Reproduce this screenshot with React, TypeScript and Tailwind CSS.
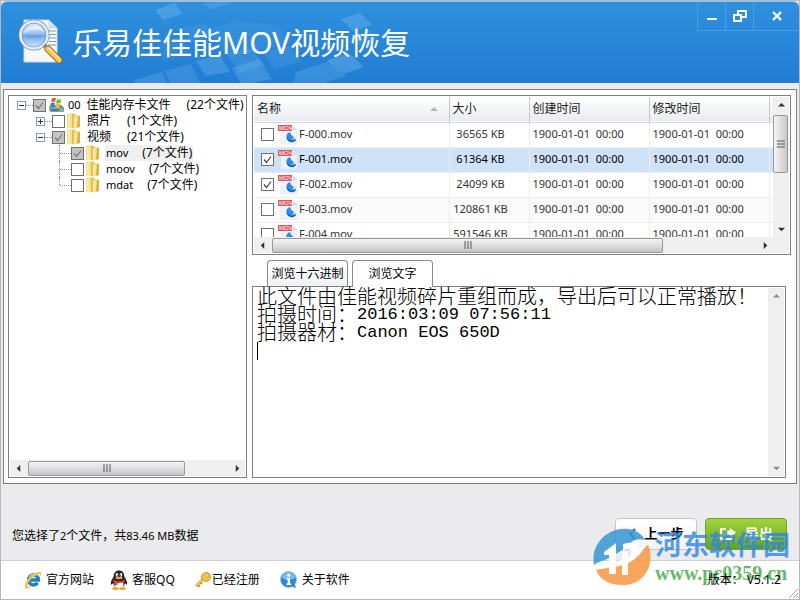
import * as React from "react";
import { useState } from "react";
import clsx from "clsx";

interface TreeNode {
  id: string;
  depth: number;
  prefix?: string;
  name: string;
  count: string;
  checked: boolean;
  expander?: "plus" | "minus";
  last?: boolean;
  active?: boolean;
}

interface FileRow {
  name: string;
  size: string;
  created: string;
  modified: string;
  checked: boolean;
}

const TREE: TreeNode[] = [
  { id: "root", depth: 0, prefix: "00", name: "佳能内存卡文件", count: "(22个文件)", checked: true, expander: "minus" },
  { id: "photo", depth: 1, name: "照片", count: "(1个文件)", checked: false, expander: "plus" },
  { id: "video", depth: 1, name: "视频", count: "(21个文件)", checked: true, expander: "minus", last: true },
  { id: "mov", depth: 2, name: "mov", count: "(7个文件)", checked: true, active: true },
  { id: "moov", depth: 2, name: "moov", count: "(7个文件)", checked: false },
  { id: "mdat", depth: 2, name: "mdat", count: "(7个文件)", checked: false, last: true },
];

const EMPTY_DATE = "1900-01-01\u00a0 00:00";

const FILES: FileRow[] = [
  { name: "F-000.mov", size: "36565 KB", created: EMPTY_DATE, modified: EMPTY_DATE, checked: false },
  { name: "F-001.mov", size: "61364 KB", created: EMPTY_DATE, modified: EMPTY_DATE, checked: true },
  { name: "F-002.mov", size: "24099 KB", created: EMPTY_DATE, modified: EMPTY_DATE, checked: true },
  { name: "F-003.mov", size: "120861 KB", created: EMPTY_DATE, modified: EMPTY_DATE, checked: false },
  { name: "F-004.mov", size: "591546 KB", created: EMPTY_DATE, modified: EMPTY_DATE, checked: false },
];

/* ---------- icons ---------- */

const AppLogo = () => (
  <svg viewBox="0 0 48 48" className="size-12 shrink-0" aria-hidden="true">
    <defs>
      <linearGradient id="lens" x1="0" y1="0" x2="0" y2="1">
        <stop offset="0" stopColor="#e4eefc" />
        <stop offset="0.45" stopColor="#9fc4f4" />
        <stop offset="0.5" stopColor="#6ea5ea" />
        <stop offset="1" stopColor="#d3f0ff" />
      </linearGradient>
      <linearGradient id="handle" x1="0" y1="1" x2="1" y2="0">
        <stop offset="0" stopColor="#c8780c" />
        <stop offset="0.5" stopColor="#ffd060" />
        <stop offset="1" stopColor="#d88a14" />
      </linearGradient>
    </defs>
    <path d="M8 1h25l8 8v34H8z" fill="#f6f8fc" stroke="#cdd9ea" />
    <path d="M33 1v8h8z" fill="#d5deec" stroke="#b8c6da" strokeWidth="0.600" />
    <path d="M32 12h8M32 15.500h8M33 19h7M33 22.500h7M32 26h8" stroke="#7f93b5" strokeWidth="1.100" />
    <circle cx="18" cy="16" r="13.500" fill="url(#lens)" stroke="#7c8ea8" strokeWidth="4" />
    <circle cx="18" cy="16" r="13.500" fill="none" stroke="#e3ebf5" strokeWidth="2.600" />
    <path d="M8 14c3-9 17-10 20-1-5-3-14-3-20 1z" fill="#fff" opacity="0.550" />
    <path d="M11 18h14" stroke="#3e78c8" opacity="0.500" />
    <path d="M28 26l3 3" stroke="#8190a5" strokeWidth="4" />
    <path d="M32 30l11 11" stroke="#9a5b08" strokeWidth="7" strokeLinecap="round" />
    <path d="M32 30l11 11" stroke="url(#handle)" strokeWidth="5.400" strokeLinecap="round" />
    <path d="M33 29l10 10" stroke="#ffe9a6" strokeWidth="1.500" strokeLinecap="round" />
  </svg>
);

const HeaderTiles = () => (
  <svg viewBox="0 0 440 83" className="absolute left-0 top-0 h-[83px] w-[440px]" aria-hidden="true">
    <g fill="#8cc8f5">
      <path d="M154 8l20-7 7 11-19 6z" opacity="0.300" />
      <path d="M200 2l14-2h20l-23 7z" opacity="0.200" />
      <path d="M340 17l19-6 12 12-19 6z" opacity="0.280" />
      <path d="M351 34l18-6 8 10-17 7z" opacity="0.150" />
      <path d="M182 26l22-5 10 12-24 8z" opacity="0.100" />
      <path d="M206 28l30-9 40 4 14 18-62 14z" opacity="0.100" />
      <path d="M155 44l26-7 8 14-26 8z" opacity="0.080" />
      <path d="M195 59l24-6 10 17-24 4z" opacity="0.260" />
      <path d="M226 52l24-6 14 17-25 8z" opacity="0.160" />
      <path d="M231 66l27-9 13 20-30 6z" opacity="0.260" />
      <path d="M133 78l28-8 6 13h-32z" opacity="0.240" />
      <path d="M163 69l27-7 10 21h-30z" opacity="0.200" />
      <path d="M262 50l26-6 12 15-26 9z" opacity="0.140" />
      <path d="M295 70l34-11 16 15-28 9h-26z" opacity="0.220" />
      <path d="M326 58l22-7 15 14-20 7z" opacity="0.300" />
    </g>
  </svg>
);

const DriveIcon = () => (
  <svg viewBox="0 0 16 16" className="size-4 shrink-0" aria-hidden="true">
    <path d="M1 10l3-2h9l3 3v4H2z" fill="#557790" />
    <path d="M1 10h12l3 2v3H2z" fill="#7ea3b8" />
    <path d="M3 13h8" stroke="#244a62" />
    <circle cx="13.500" cy="13.500" r="1" fill="#71e05d" />
    <path d="M4 1.500q2-1.500 4 0L7 5Q5 4 3 5z" fill="#e95a28" />
    <path d="M9 2q2 1.200 4.500.2L12.500 6q-2.500 1-4.500 0z" fill="#7dbd32" />
    <path d="M3 6q2-1 4 0L6 9.500Q4 8.500 2 9.500z" fill="#3180d8" />
    <path d="M8 6.500q2 1 4.500.2l-1 3.600q-2.500 1-4.500-.2z" fill="#f7bd26" />
  </svg>
);

const FolderIcon = () => (
  <svg viewBox="0 0 16 16" className="size-4 shrink-0" aria-hidden="true">
    <path d="M0 1l6-1 1 14-7 1.500z" fill="#f5e08a" />
    <path d="M5 .5l4 1v12l-4 2z" fill="#dfc05a" />
    <path d="M7 3l5-1 1 11-6 3z" fill="#f3df80" />
    <path d="M11 2.500l2 .5v11l-3 1z" fill="#d3b34c" />
    <path d="M2 2v12M8 4v10" stroke="#fff6c4" />
  </svg>
);

const MovIcon = () => (
  <svg viewBox="0 0 20 20" className="size-5 shrink-0" aria-hidden="true">
    <path d="M3 1h12l4 4v14H3z" fill="#f0f2f7" stroke="#dfe3ec" strokeWidth="0.600" />
    <path d="M15 1v4h4z" fill="#d4d9e4" />
    <rect x="0" y="0" width="14" height="6" fill="#e0565e" />
    <text x="1" y="5.200" fontSize="6" fontFamily="Liberation Sans, sans-serif" fill="#fff">
      MOV
    </text>
    <path d="M12 7c-4 1-5 6-1.500 8.800 3 2.200 7 1 7.500-2.300-1.500 1-3 .9-4 .2l2.500-.6-3.500-3.600c-.5-1-.6-1.700-1-2.500z" fill="#2c8cf0" />
    <path d="M9.200 13c1 3.500 5.500 4.800 8.300 2" stroke="#1660b4" strokeWidth="1.200" fill="none" />
  </svg>
);

const IeIcon = () => (
  <svg viewBox="0 0 18 18" className="size-[18px] shrink-0" aria-hidden="true">
    <path
      d="M13.600 11.800a5 5 0 1 1 .9-2.800H5.500"
      fill="none"
      stroke="#1f7fcb"
      strokeWidth="3.400"
    />
    <path d="M5 6c2-3 6-3.500 8.500-.8" stroke="#6ac6f5" strokeWidth="1.200" fill="none" />
    <path d="M1.500 17.500C-1 12 8-.5 16 1c2 .6 1.300 3.500.4 5 .3-2 .2-3-1.600-2.800C10 3.500 3.500 11 3.500 15.500c1 .6 2.500.2 4-.6-2 2-4.500 3.200-6 2.600z" fill="#f0c440" />
  </svg>
);

const QqIcon = () => (
  <svg viewBox="0 0 18 20" className="h-5 w-[18px] shrink-0" aria-hidden="true">
    <path d="M9 .5c3.500 0 5.300 2.500 5.300 6 1 2 3.400 4.500 2.700 8-.8.4-1.600-1-2-1.500-1 4-3 5-6 5s-5-1-6-5c-.4.500-1.200 1.900-2 1.500-.7-3.500 1.700-6 2.700-8 0-3.500 1.800-6 5.300-6z" fill="#20242c" />
    <path d="M5 11h8c1.500 5-.8 7.500-4 7.500S3.500 16 5 11z" fill="#fff" />
    <ellipse cx="7" cy="4.800" rx="1.300" ry="1.900" fill="#fff" />
    <ellipse cx="11" cy="4.800" rx="1.300" ry="1.900" fill="#fff" />
    <circle cx="7.400" cy="5" r="0.600" />
    <circle cx="10.600" cy="5" r="0.600" />
    <ellipse cx="9" cy="8" rx="3.600" ry="1.200" fill="#f6a41c" />
    <path d="M3.500 9.500c3 2 8 2 11 0l.5 2.200c-3 1.600-9 1.600-12 0zM5 11.500h2.500V15H5z" fill="#e03425" />
    <ellipse cx="5.500" cy="18.600" rx="3.400" ry="1.300" fill="#f2a01c" />
    <ellipse cx="12.500" cy="18.600" rx="3.400" ry="1.300" fill="#f2a01c" />
  </svg>
);

const KeyIcon = () => (
  <svg viewBox="0 0 16 16" className="size-4 shrink-0" aria-hidden="true">
    <path d="M8 7l-7 7M2.500 12.500l2 2M5 10l1.800 1.800" stroke="#c2962c" strokeWidth="2.600" />
    <path d="M8 7l-7 7" stroke="#f7d468" strokeWidth="1.600" />
    <circle cx="11" cy="5" r="4.500" fill="#f4c545" stroke="#c99a2c" />
    <circle cx="12.300" cy="3.700" r="1.400" fill="#fff7d8" stroke="#b0810f" strokeWidth="0.600" />
  </svg>
);

const InfoIcon = () => (
  <svg viewBox="0 0 18 18" className="size-[18px] shrink-0" aria-hidden="true">
    <circle cx="8.500" cy="8.500" r="8" fill="#2d86d9" stroke="#9fc0dd" />
    <path d="M2 7a6.500 6.500 0 0 1 13 0c-4 2-9 2-13 0z" fill="#79baf2" />
    <path d="M11 15l5 2-1.500-4.500z" fill="#2d86d9" />
    <circle cx="8.700" cy="4.200" r="1.500" fill="#fff" />
    <path d="M6.500 7h3.500v5.500h1.300V14H6.300v-1.500h1.300v-4H6.500z" fill="#fff" />
  </svg>
);

const ExportIcon = () => (
  <svg viewBox="0 0 18 14" className="h-[14px] w-[18px]" aria-hidden="true">
    <path d="M7 2H2v10h11V9" fill="none" stroke="#fff" strokeWidth="2" />
    <path d="M5 10c0-5 3-6.500 6-6.500V1l6 4.500-6 4.500V7.500C8.500 7.300 6.500 8 5 10z" fill="#fff" />
  </svg>
);

/* ---------- small controls ---------- */

interface TickBoxProps {
  label: string;
  initial: boolean;
  filled?: boolean;
}

const TickBox: React.FC<TickBoxProps> = ({ label, initial, filled }) => {
  const [checked, setChecked] = useState(initial);

  return (
    <span className="relative block size-[13px] shrink-0">
      <input
        type="checkbox"
        aria-label={label}
        checked={checked}
        onChange={(e) => setChecked(e.target.checked)}
        className={clsx(
          "block size-[13px] appearance-none border border-[#707070]",
          filled && checked ? "bg-[#c4c4c4]" : "bg-white"
        )}
      />
      {checked && (
        <svg viewBox="0 0 13 13" className="pointer-events-none absolute inset-0 size-[13px]" aria-hidden="true">
          <path d="M3 6.500l2.500 3L10 3.500" fill="none" stroke={filled ? "#777" : "#444"} strokeWidth="1.200" />
        </svg>
      )}
    </span>
  );
};

const ARROWS = {
  up: "M0 5h8L4 1z",
  down: "M0 2h8L4 6z",
  left: "M6 0v8L2 4z",
  right: "M2 0v8l4-4z",
};

const ScrollArrow = ({ dir, label, muted }: { dir: keyof typeof ARROWS; label: string; muted?: boolean }) => (
  <button type="button" aria-label={label} className="grid size-4 shrink-0 place-items-center">
    <svg viewBox="0 0 8 8" className="size-[7px]" aria-hidden="true">
      <path d={ARROWS[dir]} fill={muted ? "#8a8a8a" : "#333"} />
    </svg>
  </button>
);

const Grip = ({ vertical }: { vertical?: boolean }) => (
  <svg viewBox="0 0 8 8" className={clsx("size-2", vertical && "rotate-90")} aria-hidden="true">
    <path d="M1 0v8M4 0v8M7 0v8" stroke="#555" strokeWidth="1" />
  </svg>
);

const HScroll = ({ thumbClass }: { thumbClass: string }) => (
  <div className="flex h-4 shrink-0 items-center bg-[#efefef]">
    <ScrollArrow dir="left" label="向左滚动" />
    <div className="h-[15px] flex-1 px-[2px]">
      <div
        className={clsx(
          "grid h-full place-items-center rounded-xs border border-[#999] bg-linear-to-b from-[#f4f4f4] via-[#dedede] to-[#c4c4c4]",
          thumbClass
        )}
      >
        <Grip />
      </div>
    </div>
    <ScrollArrow dir="right" label="向右滚动" />
  </div>
);

const TreeRow = ({ node }: { node: TreeNode }) => (
  <li className="flex h-4 items-center">
    {node.depth === 1 && <span className="w-[19px] shrink-0" />}
    {node.depth === 2 && <span className="w-[38px] shrink-0" />}
    {node.expander ? (
      <>
        <button
          type="button"
          aria-label={node.name}
          className="grid size-[9px] shrink-0 place-items-center border border-[#8c9cae] bg-white"
        >
          <svg viewBox="0 0 5 5" className="size-[5px]" aria-hidden="true">
            <path d={node.expander === "plus" ? "M0 2.500h5M2.500 0v5" : "M0 2.500h5"} stroke="#123a6b" />
          </svg>
        </button>
        <span className="w-[7px] border-t border-dotted border-[#888]" />
      </>
    ) : (
      <span className="flex h-4 w-4 shrink-0 pl-1">
        <span className={clsx("border-l border-dotted border-[#888]", node.last ? "h-2" : "h-4")} />
        <span className="mt-2 h-0 flex-1 border-t border-dotted border-[#888]" />
      </span>
    )}
    <TickBox label={node.name} initial={node.checked} filled />
    <span className="ml-[2px] flex">{node.depth === 0 ? <DriveIcon /> : <FolderIcon />}</span>
    <span className={clsx("ml-[3px] flex h-4 items-center whitespace-nowrap px-px", node.active && "bg-[#efefef]")}>
      {node.prefix && <span className="mr-1.5 text-[11px]">{node.prefix}</span>}
      <span className={node.depth === 2 ? "text-[11px]" : ""}>{node.name}</span>
      <span className={node.depth === 2 ? "ml-3.5" : "ml-4"}>{node.count}</span>
    </span>
  </li>
);

const HEAD_CELL = "border-r border-[#c3c6cb] px-[3px] text-left font-normal";
const BODY_CELL = "border-r border-[#ececec] px-[3px]";

const FileTable = () => (
  <div className="border border-[#7c7f87] bg-white p-px">
    <div className="flex h-[140px]">
      <div className="min-w-0 flex-1 overflow-hidden">
        <table className="w-full table-fixed border-collapse">
          <thead>
            <tr className="h-[25px] border-b border-[#d5d7da] bg-linear-to-b from-white to-[#e9ecef] text-xs text-[#222]">
              <th className={HEAD_CELL}>
                <span className="flex items-center justify-between pr-2">
                  名称
                  <svg viewBox="0 0 8 4" className="h-1 w-2" aria-hidden="true">
                    <path d="M0 4h8L4 0z" fill="#b5b5b5" />
                  </svg>
                </span>
              </th>
              <th className={clsx(HEAD_CELL, "w-20")}>大小</th>
              <th className={clsx(HEAD_CELL, "w-[120px]")}>创建时间</th>
              <th className={clsx(HEAD_CELL, "w-[120px]")}>修改时间</th>
              <th className="w-1" />
            </tr>
          </thead>
          <tbody className="text-[11px] text-[#333]">
            {FILES.map((file, i) => (
              <tr
                key={file.name}
                className={clsx(
                  "h-[25px] border-b border-[#ededed]",
                  i === 1 && "bg-[#cfe3f8] text-black",
                  i === 3 && "bg-[#fafafa]"
                )}
              >
                <td className={BODY_CELL}>
                  <span className="flex items-center pl-1">
                    <TickBox label={file.name} initial={file.checked} />
                    <span className="ml-1 flex">
                      <MovIcon />
                    </span>
                    <span className="ml-px">{file.name}</span>
                  </span>
                </td>
                <td className={clsx(BODY_CELL, "pr-5 text-center whitespace-nowrap")}>{file.size}</td>
                <td className={clsx(BODY_CELL, "whitespace-nowrap")}>{file.created}</td>
                <td className={clsx(BODY_CELL, "whitespace-nowrap")}>{file.modified}</td>
                <td />
              </tr>
            ))}
          </tbody>
        </table>
      </div>
      <div className="flex w-4 shrink-0 flex-col items-center bg-[#f0f0f0]">
        <ScrollArrow dir="up" label="向上滚动" />
        <div className="w-full flex-1 pt-[2px]">
          <div className="grid h-[58px] w-[15px] place-items-center rounded-xs border border-[#999] bg-linear-to-r from-[#f4f4f4] to-[#c9c9c9]">
            <Grip vertical />
          </div>
        </div>
        <ScrollArrow dir="down" label="向下滚动" />
      </div>
    </div>
    <div className="flex bg-[#efefef]">
      <div className="flex-1">
        <HScroll thumbClass="w-[81%]" />
      </div>
      <span className="w-4" />
    </div>
  </div>
);

const TabButton = ({ active, onClick, children }: { active: boolean; onClick: () => void; children: React.ReactNode }) => (
  <button
    type="button"
    role="tab"
    aria-selected={active}
    onClick={onClick}
    className={clsx(
      "w-[81px] whitespace-nowrap rounded-t border border-b-0 border-[#8a8a8a] text-xs",
      active ? "-mb-px h-[27px] bg-white" : "h-[26px] bg-linear-to-b from-white to-[#f0f1f3]"
    )}
  >
    {children}
  </button>
);

const Preview = () => {
  const [tab, setTab] = useState<"hex" | "text">("text");

  return (
    <div className="mr-[5px] mt-[5px] flex flex-1 flex-col">
      <div role="tablist" className="z-10 flex items-end gap-1 pl-[15px]">
        <TabButton active={tab === "hex"} onClick={() => setTab("hex")}>
          浏览十六进制
        </TabButton>
        <TabButton active={tab === "text"} onClick={() => setTab("text")}>
          浏览文字
        </TabButton>
      </div>
      <div className="flex flex-1 border border-[#7c7f87] bg-white p-px">
        {/* CJK glyphs take two columns, latin glyphs take one */}
        <div
          role="textbox"
          aria-multiline="true"
          aria-label="浏览文字"
          tabIndex={0}
          className="flex-1 pl-[3px] text-[20px] font-light leading-[18px] whitespace-nowrap text-black"
        >
          <p className="h-[18px]">此文件由佳能视频碎片重组而成，导出后可以正常播放！</p>
          <p className="flex h-[18px]">
            拍摄时间：<span className="font-['Liberation_Mono'] text-[17px]">2016:03:09 07:56:11</span>
          </p>
          <p className="flex h-[18px]">
            拍摄器材：<span className="font-['Liberation_Mono'] text-[17px]">Canon EOS 650D</span>
          </p>
          <span className="block h-[18px] w-px bg-black" />
        </div>
        <div className="flex w-4 flex-col justify-between bg-[#efefef]">
          <ScrollArrow dir="up" label="向上滚动" muted />
          <ScrollArrow dir="down" label="向下滚动" muted />
        </div>
      </div>
    </div>
  );
};

const WindowButton = ({ label, wide, children }: { label: string; wide?: boolean; children: React.ReactNode }) => (
  <button
    type="button"
    aria-label={label}
    className={clsx("grid h-[29px] place-items-center border-b border-l border-[#4e9fe2]", wide ? "w-[46px]" : "w-7")}
  >
    <svg viewBox="0 0 14 12" className="h-3 w-[14px]" fill="none" stroke="#fff" strokeWidth="2" aria-hidden="true">
      {children}
    </svg>
  </button>
);

const Watermark = () => (
  <div className="pointer-events-none absolute bottom-[13px] right-[9px] flex items-center gap-1">
    <svg viewBox="0 0 58 58" className="size-[58px]" aria-hidden="true">
      <path d="M1 37C-3 15 16-1 35 1c8 1 14 5 17 11-3-1-7-1-10 0-6 2-8 8-16 12C17 31 6 33 1 37z" fill="#3b97d3" opacity="0.880" />
      <path d="M3 42c10-3 32-4 44-16 4-4 5-8 8-9 7 14 0 38-22 40C17 58 7 52 3 42z" fill="#f79a45" opacity="0.880" />
      <path d="M11 24l12-9v31h-7V27h-5zM30 16c19-6 23 10 5 19v12h-6V24h6v6c7-6 4-11-5-8z" fill="#fff" />
      <path d="M2 41c14-10 34-4 49-24-5 20-29 23-49 24z" fill="#fff" />
    </svg>
    <div className="opacity-80">
      <p className="text-[27px] font-bold leading-[32px] text-[#2f86e8]">河东软件园</p>
      <p className="font-['Liberation_Serif'] text-[20px] font-bold leading-[24px] text-[#3eaa45]">www.pc0359.cn</p>
    </div>
  </div>
);

export default function App() {
  return (
    <div className="relative flex min-h-screen flex-col border border-[#b4b7bc] bg-[#ebebed] font-['Noto_Sans','Noto_Sans_CJK_SC',sans-serif] text-xs text-black">
      <header className="relative flex h-[82px] items-center overflow-hidden rounded-t-md border-t border-[#8cc6f2] bg-linear-to-b from-[#2f90dd] to-[#217dd4] pl-[15px]">
        <HeaderTiles />
        <div className="relative flex items-center gap-2">
          <AppLogo />
          <h1 className="whitespace-nowrap text-[30px] leading-10 text-white">乐易佳佳能MOV视频恢复</h1>
        </div>
        <div className="relative ml-auto flex self-start">
          <WindowButton label="最小化">
            <path d="M2 9h10" />
          </WindowButton>
          <WindowButton label="还原">
            <path d="M5 5V1h8v6H9M1 5h7v6H1z" />
          </WindowButton>
          <WindowButton label="关闭" wide>
            <path d="M3 2l8 8M11 2l-8 8" strokeWidth="2.400" />
          </WindowButton>
        </div>
      </header>

      <main className="mx-[2px] mt-[6px] flex flex-1 gap-[5px] border border-[#7c7f87] bg-white py-[5px] pl-1 pr-[5px]">
        <section className="flex w-[239px] shrink-0 flex-col border border-[#7c7f87] p-px">
          <ul className="flex-1 overflow-hidden pl-[7px]">
            {TREE.map((node) => (
              <TreeRow key={node.id} node={node} />
            ))}
          </ul>
          <HScroll thumbClass="w-[79%]" />
        </section>
        <section className="flex min-w-0 flex-1 flex-col">
          <FileTable />
          <Preview />
        </section>
      </main>

      <div className="flex h-[76px] items-end justify-between pl-[11px] pr-3">
        <p className="mb-4 leading-4">
          您选择了<span className="text-[11px]">2</span>个文件，共<span className="text-[11px]">83.46 MB</span>数据
        </p>
        <div className="mb-[10px] flex gap-2">
          <button
            type="button"
            className="flex h-8 w-[82px] items-center justify-center gap-2 rounded border border-[#c3c5c8] bg-linear-to-b from-white to-[#f3f3f4] text-[13px] font-bold"
          >
            <svg viewBox="0 0 8 12" className="h-3 w-2" aria-hidden="true">
              <path d="M7 1L2 6l5 5" fill="none" stroke="#2a6fa8" strokeWidth="2.400" />
            </svg>
            上一步
          </button>
          <button
            type="button"
            className="flex h-8 w-[82px] items-center justify-center gap-2 rounded border border-[#6fa32a] bg-linear-to-b from-[#a5d33c] to-[#5fa41e] text-sm font-bold text-white"
          >
            <ExportIcon />
            导出
          </button>
        </div>
      </div>

      <footer className="flex h-[39px] items-center border-t border-[#cfcfd2] bg-white pl-[23px] pr-[18px]">
        <nav className="flex items-center gap-4">
          <a href="#site" className="flex items-center gap-1">
            <IeIcon />
            官方网站
          </a>
          <a href="#qq" className="flex items-center gap-1">
            <QqIcon />
            客服QQ
          </a>
          <a href="#license" className="ml-1 flex items-center gap-px">
            <KeyIcon />
            已经注册
          </a>
          <a href="#about" className="ml-1 flex items-center gap-1">
            <InfoIcon />
            关于软件
          </a>
        </nav>
        <p className="relative z-10 ml-auto">版本： V5.1.2</p>
      </footer>

      <svg viewBox="0 0 10 10" className="absolute bottom-px right-px size-[10px]" aria-hidden="true">
        <path d="M1 10l9-9M5 10l5-5M8 10l2-2" stroke="#a5a5a5" />
      </svg>
      <Watermark />
    </div>
  );
}
